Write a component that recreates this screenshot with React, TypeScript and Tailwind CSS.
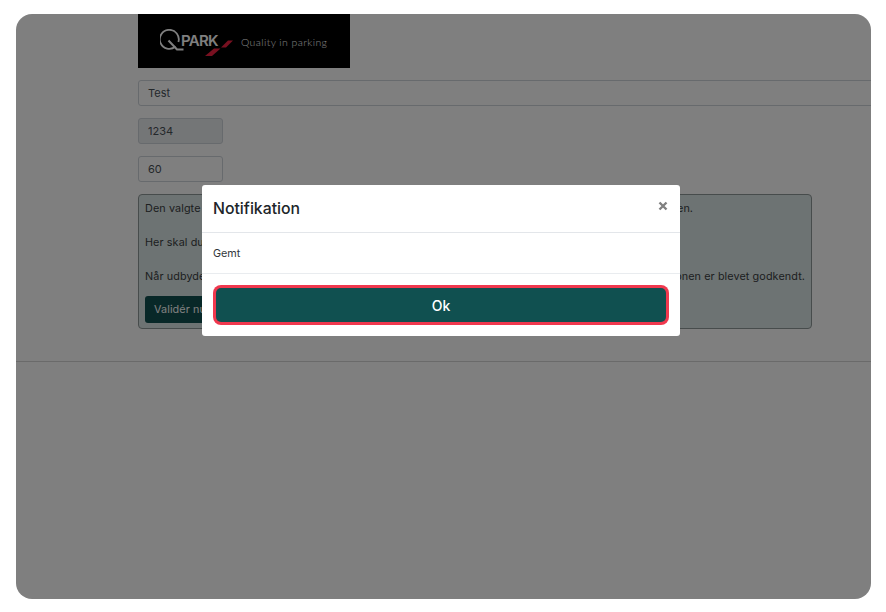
function Logo() {
	return (
		<div className="relative flex h-[54px] w-[212px] items-center bg-black pl-[22px]">
			<svg width="24" height="23" viewBox="0 0 24 23" fill="none" className="mt-[-1px] shrink-0">
				<path d="M15.5 17.5A9.5 9.5 0 1 1 18.4 13" stroke="#ffffff" strokeWidth="1.8" />
				<path d="M8.5 11.5L17 20.5H23.5" stroke="#ffffff" strokeWidth="2.1" />
			</svg>
			<span className="ml-[-3px] mt-[-1px] font-['Inter',sans-serif] text-[15px] font-semibold leading-none tracking-[-0.7px] text-white">PARK</span>
			<svg width="28" height="16" viewBox="0 0 28 16" className="absolute left-[67px] top-[26px]">
				<path d="M0 16L9 8.5H15.5L7 16z" fill="#f02040" />
				<path d="M16 7.5L23 0.5H28L21 7.5z" fill="#f02040" />
			</svg>
			<span className="ml-[23px] mt-[3px] font-['Lato',sans-serif] text-[10.5px] font-light leading-none tracking-[0.4px] text-white">Quality in parking</span>
		</div>
	);
}

function App() {
	return (
		<div className="h-[612px] w-[886px] overflow-hidden bg-white pb-[13px] pl-[16px] pr-[15px] pt-[14px] font-['Inter',sans-serif]">
			<div className="relative h-[585px] w-[855px] overflow-hidden rounded-[16px] bg-white text-[#212529]">
				<div className="pl-[122px]">
					<Logo />
					<div className="mt-[12px] flex h-[26px] w-[760px] items-center rounded-[3px] border border-[#ced4da] pl-[9px] text-[11px] text-[#495057]">Test</div>
					<div className="mt-[12px] flex h-[26px] w-[85px] items-center rounded-[3px] border border-[#ced4da] bg-[#e9ecef] pl-[9px] text-[11px] text-[#495057]">1234</div>
					<div className="mt-[12px] flex h-[26px] w-[85px] items-center rounded-[3px] border border-[#ced4da] pl-[9px] text-[11px] text-[#495057]">60</div>
					<div className="mt-[12px] h-[135px] w-[674px] rounded-[4px] border border-[#8f9898] bg-[#dbe6e6] px-[6px] pt-[7px] text-[10.8px] leading-[13px] tracking-[0.1px] text-[#3a4042]">
						<div className="flex whitespace-nowrap">
							<span className="w-[532px]">Den valgte</span>
							<span>en.</span>
						</div>
						<p className="mt-[21px] whitespace-nowrap">Her skal du</p>
						<div className="mt-[21px] flex justify-between whitespace-nowrap">
							<span>Når udbyde</span>
							<span>onen er blevet godkendt.</span>
						</div>
						<button type="button" className="mt-[13px] h-[27px] w-[100px] rounded-[3px] bg-[#105050] pl-[9px] text-left text-[10.8px] text-white">Validér nu</button>
					</div>
				</div>
				<hr className="mt-[32px] border-t border-[#d5d5d5]" />

				<div className="absolute inset-0 bg-black/50" />

				<div className="absolute left-[186px] top-[171px] w-[478px] rounded-[3px] bg-white">
					<div className="relative flex h-[48px] items-center border-b border-[#e3e6ea] px-[11px] pt-[1px]">
						<h5 className="text-[15.8px] font-medium leading-none text-[#212529]">Notifikation</h5>
						<svg width="10" height="10" viewBox="0 0 10 10" className="absolute right-[12px] top-[16px]">
							<path d="M1.5 1.5L8.5 8.5M8.5 1.5L1.5 8.5" stroke="#808080" strokeWidth="2.4" />
						</svg>
					</div>
					<div className="flex h-[41px] items-center border-b border-[#e9ecef] px-[11px] pt-[2px] text-[10.8px] text-[#33383c]">Gemt</div>
					<div className="px-[14px] py-[14px]">
						<button type="button" className="flex h-[34px] w-full items-center justify-center rounded-[5px] bg-[#105050] text-[14px] font-medium text-white shadow-[0_0_0_3px_#f0384e]">Ok</button>
					</div>
				</div>
			</div>
		</div>
	);
}

export default App;
